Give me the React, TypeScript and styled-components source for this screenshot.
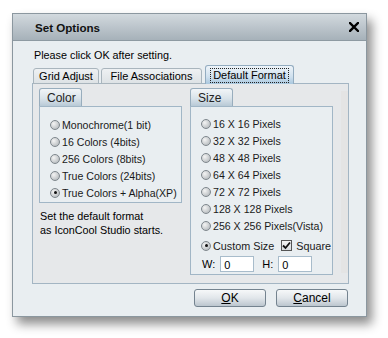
import styled, { createGlobalStyle } from "styled-components";

const GlobalStyle = createGlobalStyle`
  body {
    margin: 0;
    background: #fff;
    font-family: "Liberation Sans", Arial, sans-serif;
    font-size: 11px;
    color: #000;
  }
`;

const colorOptions = [
  "Monochrome(1 bit)",
  "16 Colors (4bits)",
  "256 Colors (8bits)",
  "True Colors (24bits)",
  "True Colors + Alpha(XP)",
];

const sizeOptions = [
  "16 X 16 Pixels",
  "32 X 32 Pixels",
  "48 X 48 Pixels",
  "64 X 64 Pixels",
  "72 X 72 Pixels",
  "128 X 128 Pixels",
  "256 X 256 Pixels(Vista)",
];

const Radio = ({ label, checked }: { label: string; checked?: boolean }) => (
  <OptionRow>
    <RadioDot $checked={checked} />
    <span>{label}</span>
  </OptionRow>
);

const App = () => {
  return (
    <Page>
      <GlobalStyle />
      <Dialog>
        <TitleBar>
          <span>Set Options</span>
          <svg width="10" height="10" viewBox="0 0 10 10">
            <path d="M1 1 L9 9 M9 1 L1 9" stroke="#000" strokeWidth="2.4" strokeLinecap="square" />
          </svg>
        </TitleBar>
        <Body>
          <Hint>Please click OK after setting.</Hint>
          <TabRow>
            <Tab $w={66}>Grid Adjust</Tab>
            <Tab $w={101}>File Associations</Tab>
            <Tab $w={89} $active>
              <Focus>Default Format</Focus>
            </Tab>
          </TabRow>
          <Panel>
            <Column>
              <Legend>Color</Legend>
              <GroupBox $pad="9px 0 1px 10px">
                {colorOptions.map((o, i) => (
                  <Radio key={o} label={o} checked={i === 4} />
                ))}
              </GroupBox>
              <Note>
                Set the default format
                <br />
                as IconCool Studio starts.
              </Note>
            </Column>
            <Column>
              <Legend>Size</Legend>
              <GroupBox $pad="8px 0 2px 10px">
                {sizeOptions.map((o) => (
                  <Radio key={o} label={o} />
                ))}
                <CustomRow>
                  <RadioDot $checked />
                  <span>Custom Size</span>
                  <CheckBox>
                    <svg width="9" height="9" viewBox="0 0 9 9">
                      <path d="M1 4.5 L3.5 7 L8 1.5" stroke="#111" strokeWidth="1.8" fill="none" />
                    </svg>
                  </CheckBox>
                  <span>Square</span>
                </CustomRow>
                <SizeRow>
                  <span>W:</span>
                  <NumberBox $gap={5}>0</NumberBox>
                  <SizeLabel>H:</SizeLabel>
                  <NumberBox $gap={5}>0</NumberBox>
                </SizeRow>
              </GroupBox>
            </Column>
            <Strip />
          </Panel>
          <ButtonRow>
            <Button>
              <u>O</u>K
            </Button>
            <Button>
              <u>C</u>ancel
            </Button>
          </ButtonRow>
        </Body>
      </Dialog>
    </Page>
  );
};

const Page = styled.div`
  width: 388px;
  height: 338px;
  padding: 13px 0 0 12px;
  box-sizing: border-box;
`;

const Dialog = styled.div`
  width: 355px;
  height: 304px;
  box-sizing: border-box;
  border: 1px solid #8b979f;
  background: #e9eef1;
  box-shadow: 5px 7px 10px rgba(0, 0, 0, 0.45);
  display: flex;
  flex-direction: column;
  white-space: nowrap;
`;

const TitleBar = styled.div`
  height: 26px;
  flex: none;
  display: flex;
  align-items: center;
  justify-content: space-between;
  padding: 0 7px 0 22px;
  background: linear-gradient(#d2d9de, #a6b1b9);
  border-bottom: 1px solid #8e9aa2;
  font-weight: bold;
  font-size: 11.6px;
  color: #111;
`;

const Body = styled.div`
  padding: 8px 17px 0 19px;
  display: flex;
  flex-direction: column;
`;

const Hint = styled.div`
  line-height: 13px;
  padding-left: 2px;
  font-size: 10.8px;
`;

const TabRow = styled.div`
  display: flex;
  align-items: flex-end;
  margin-top: 3px;
  padding-left: 1px;
  gap: 2px;
  position: relative;
  z-index: 1;
  margin-bottom: -1px;
`;

const Tab = styled.div<{ $active?: boolean; $w: number }>`
  width: ${(p) => p.$w}px;
  height: ${(p) => (p.$active ? "19px" : "16px")};
  box-sizing: border-box;
  display: flex;
  align-items: center;
  justify-content: center;
  border: 1px solid ${(p) => (p.$active ? "#93acc0" : "#a9b5bd")};
  border-bottom: ${(p) => (p.$active ? "none" : "1px solid #a9b5bd")};
  border-radius: 3px 3px 0 0;
  background: ${(p) =>
    p.$active
      ? "linear-gradient(#eef4f9, #cfe0ee 60%, #a9c7de)"
      : "linear-gradient(#eef1f3, #dde2e5)"};
  font-size: 11px;
  margin-left: ${(p) => (p.$active ? "1px" : "0")};
`;

const Focus = styled.span`
  border: 1px dotted #222;
  padding: 0 2px;
  line-height: 13px;
`;

const Panel = styled.div`
  height: 201px;
  box-sizing: border-box;
  border: 1px solid #a3b5c3;
  background: #e6e8ea;
  display: flex;
  gap: 8px;
  padding: 4px 0 0 6px;
`;

const Column = styled.div`
  width: 143px;
  display: flex;
  flex-direction: column;
`;

const Strip = styled.div`
  flex: 1;
  margin-top: 3px;
  margin-bottom: 10px;
  background: #e4e4e4;
`;

const Legend = styled.div`
  width: 43px;
  height: 18px;
  box-sizing: border-box;
  padding-left: 7px;
  display: flex;
  align-items: center;
  border: 1px solid #98adbd;
  border-bottom: none;
  border-radius: 3px 3px 0 0;
  background: linear-gradient(#f2f5f8, #d9e3ea 55%, #b8c9d6);
  font-size: 12px;
  color: #222;
`;

const GroupBox = styled.div<{ $pad: string }>`
  border: 1px solid #a1b6c6;
  background: #e9eef1;
  padding: ${(p) => p.$pad};
  display: flex;
  flex-direction: column;
`;

const OptionRow = styled.div`
  height: 17px;
  display: flex;
  align-items: center;
  gap: 2px;
  color: #1a1a1a;
  font-size: 10.6px;
`;

const RadioDot = styled.span<{ $checked?: boolean }>`
  width: 10px;
  height: 10px;
  box-sizing: border-box;
  border-radius: 50%;
  border: 1px solid #7f878d;
  background: radial-gradient(circle at 35% 35%, #f4f4f4, #a9afb3);
  display: flex;
  align-items: center;
  justify-content: center;
  flex: none;
  &::after {
    content: "";
    width: 3px;
    height: 3px;
    border-radius: 50%;
    background: ${(p) => (p.$checked ? "#111" : "transparent")};
  }
`;

const CustomRow = styled(OptionRow)`
  margin-top: 3px;
  font-size: 10.8px;
`;

const CheckBox = styled.span`
  width: 11px;
  height: 11px;
  box-sizing: border-box;
  border: 1px solid #555;
  background: linear-gradient(#f4f4f4, #d8dcdf);
  display: flex;
  align-items: center;
  justify-content: center;
  margin-left: 5px;
  margin-right: 2px;
`;

const SizeRow = styled.div`
  height: 17px;
  display: flex;
  align-items: center;
  padding-left: 1px;
  margin-top: 1px;
  font-size: 11px;
`;

const SizeLabel = styled.span`
  margin-left: 8px;
`;

const NumberBox = styled.div<{ $gap: number }>`
  width: 34px;
  height: 16px;
  box-sizing: border-box;
  margin-left: ${(p) => p.$gap}px;
  border: 1px solid #a8bccb;
  background: #fff;
  padding: 2px 0 0 3px;
  font-size: 11px;
`;

const Note = styled.div`
  margin-top: 6px;
  line-height: 14px;
  padding-left: 1px;
  font-size: 10.8px;
`;

const ButtonRow = styled.div`
  display: flex;
  justify-content: flex-end;
  gap: 10px;
  margin-top: 5px;
  padding-right: 1px;
`;

const Button = styled.div`
  width: 72px;
  height: 18px;
  box-sizing: border-box;
  border: 1px solid #74838f;
  border-radius: 3px;
  background: linear-gradient(#f6f8f9, #e1e6ea 50%, #bcc6ce);
  display: flex;
  align-items: center;
  justify-content: center;
  font-size: 12px;
`;

export default App;
